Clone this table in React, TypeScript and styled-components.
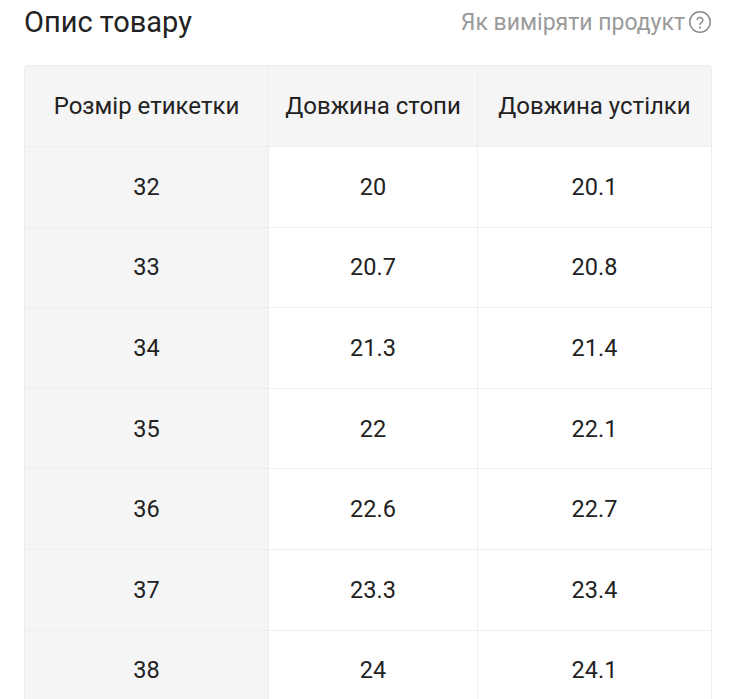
import React from 'react';
import styled, { createGlobalStyle } from 'styled-components';

const GlobalStyle = createGlobalStyle`
  html, body {
    margin: 0;
    padding: 0;
    background: #ffffff;
    font-family: Roboto, "Noto Sans", sans-serif;
    color: #222222;
  }
`;

const Page = styled.div`
  padding: 0 24px;
`;

const Header = styled.div`
  display: flex;
  align-items: center;
  justify-content: space-between;
  height: 44px;
  margin-bottom: 21px;
`;

const Title = styled.h2`
  margin: 0;
  font-size: 29px;
  font-weight: 400;
  color: #222222;
`;

const HowTo = styled.a`
  display: flex;
  align-items: center;
  gap: 3px;
  font-size: 23px;
  color: #9a9a9a;
  text-decoration: none;
`;

const Table = styled.table`
  width: 100%;
  border-collapse: separate;
  border-spacing: 0;
  border: 1px solid #ececec;
  border-bottom: none;
  border-radius: 5px 5px 0 0;
  overflow: hidden;
  table-layout: fixed;
`;

const Cell = styled.td<{ $shade?: boolean; $first?: boolean }>`
  height: 79.6px;
  padding: 0;
  text-align: center;
  font-size: 23.5px;
  font-weight: 400;
  color: #222222;
  background: ${p => (p.$shade ? '#f5f5f5' : '#ffffff')};
  border-top: 1px solid #eeeeee;
  border-left: ${p => (p.$first ? 'none' : '1px solid #eeeeee')};
`;

const HeadCell = styled(Cell).attrs({ as: 'th' })`
  height: 80px;
  border-top: none;
  font-size: 24px;
  background: #f5f5f5;
`;

const rows: [string, string, string][] = [
  ['32', '20', '20.1'],
  ['33', '20.7', '20.8'],
  ['34', '21.3', '21.4'],
  ['35', '22', '22.1'],
  ['36', '22.6', '22.7'],
  ['37', '23.3', '23.4'],
  ['38', '24', '24.1'],
];

const HelpIcon = () => (
  <svg width="24" height="24" viewBox="0 0 24 24" fill="none" stroke="#8a8a8a" strokeWidth="1.5" strokeLinecap="round">
    <circle cx="12" cy="12" r="10.2" />
    <path d="M9.2 9.4a2.9 2.9 0 0 1 5.6 1c0 1.9-2.8 2.3-2.8 4.1" />
    <circle cx="12" cy="17.6" r="0.4" fill="#8a8a8a" />
  </svg>
);

const App: React.FC = () => {
  return (
    <Page>
      <GlobalStyle />
      <Header>
        <Title>Опис товару</Title>
        <HowTo href="#">
          Як виміряти продукт
          <HelpIcon />
        </HowTo>
      </Header>
      <Table>
        <colgroup>
          <col style={{ width: 243 }} />
          <col style={{ width: 209 }} />
          <col />
        </colgroup>
        <thead>
          <tr>
            <HeadCell $first>Розмір етикетки</HeadCell>
            <HeadCell>Довжина стопи</HeadCell>
            <HeadCell>Довжина устілки</HeadCell>
          </tr>
        </thead>
        <tbody>
          {rows.map(r => (
            <tr key={r[0]}>
              <Cell $first $shade>{r[0]}</Cell>
              <Cell>{r[1]}</Cell>
              <Cell>{r[2]}</Cell>
            </tr>
          ))}
        </tbody>
      </Table>
    </Page>
  );
};

export default App;
